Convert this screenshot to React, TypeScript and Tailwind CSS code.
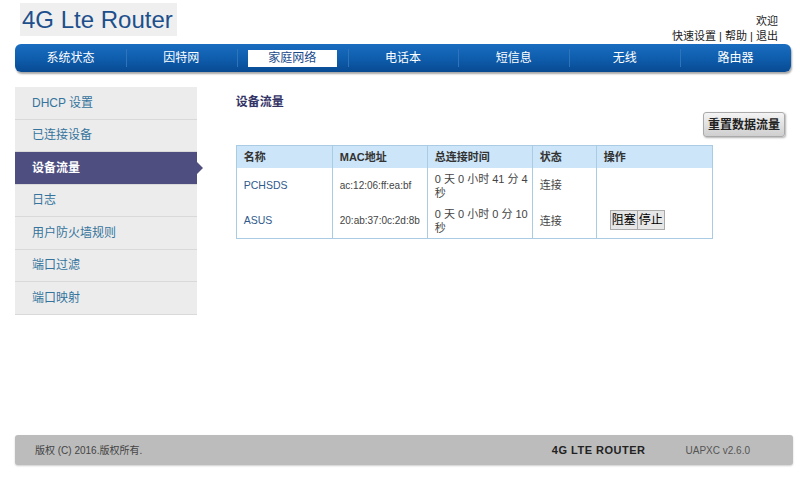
const navItems = ['系统状态', '因特网', '家庭网络', '电话本', '短信息', '无线', '路由器'];
const sideItems = ['DHCP 设置', '已连接设备', '设备流量', '日志', '用户防火墙规则', '端口过滤', '端口映射'];

type Device = { name: string; mac: string; time: [string, string]; state: string; actions: boolean };

const devices: Device[] = [
  { name: 'PCHSDS', mac: 'ac:12:06:ff:ea:bf', time: ['0 天 0 小时 41 分 4', '秒'], state: '连接', actions: false },
  { name: 'ASUS', mac: '20:ab:37:0c:2d:8b', time: ['0 天 0 小时 0 分 10', '秒'], state: '连接', actions: true },
];

const font = { fontFamily: '"Liberation Sans", Arial, "Noto Sans CJK SC", sans-serif' };

export default function App() {
  return (
    <div className="w-[800px] h-[485px] bg-white relative overflow-hidden" style={font}>
      {/* header */}
      <div className="h-[44px] flex justify-between px-[15px]">
        <div className="mt-[3px] ml-[5px] h-[33px] w-[157px] bg-[#efefef] flex items-center pl-[2px]">
          <span className="text-[24px] leading-none text-[#1d4f8c]">4G Lte Router</span>
        </div>
        <div className="flex flex-col items-end pr-[7px] pt-[14px] text-[11px] leading-[15px] text-[#222]">
          <span>欢迎</span>
          <span>快速设置 | 帮助 | 退出</span>
        </div>
      </div>

      {/* nav */}
      <div className="mx-[15px] mr-[9px] h-[28px] rounded-[6px] bg-gradient-to-b from-[#1a6dc0] via-[#0f5eae] to-[#084a92] shadow-[1px_2px_2px_rgba(0,0,0,0.35)] flex items-center">
        {navItems.map((item, i) => (
          <div key={item} className="flex-1 h-full flex items-center justify-center relative">
            {i > 0 && <span className="absolute left-0 top-[5px] bottom-[5px] w-px bg-[#2f74bb]" />}
            {item === '家庭网络' ? (
              <span className="bg-white text-[#1a4a8a] text-[12px] h-[17px] w-[89px] flex items-center justify-center">{item}</span>
            ) : (
              <span className="text-white text-[12px]">{item}</span>
            )}
          </div>
        ))}
      </div>

      {/* main */}
      <div className="h-[363px] flex px-[15px] pt-[15px]">
        <div className="w-[182px] self-start bg-[#ececec] relative">
          {sideItems.map((s) => {
            const active = s === '设备流量';
            return (
              <div
                key={s}
                className={
                  active
                    ? 'h-[32.5px] border-b border-[#d9d9d9] bg-[#4e4e80] text-white font-bold text-[12px] flex items-center pl-[17px] relative'
                    : 'h-[32.5px] border-b border-[#d9d9d9] text-[#35749c] text-[12px] flex items-center pl-[17px]'
                }
              >
                {s}
                {active && (
                  <span className="absolute right-[-6px] top-1/2 -translate-y-1/2 w-0 h-0 border-y-[6px] border-y-transparent border-l-[6px] border-l-[#4e4e80]" />
                )}
              </div>
            );
          })}
        </div>

        <div className="ml-[39px] w-[550px] flex flex-col">
          <div className="pt-[6px] text-[12px] font-bold text-[#333366]">设备流量</div>
          <div className="flex justify-end mt-[1px]">
            <button className="h-[25px] w-[82px] rounded-[3px] border border-[#aaa] bg-gradient-to-b from-[#f4f4f4] to-[#cfcfcf] text-[12px] font-bold text-[#222] shadow-[1px_1px_2px_rgba(0,0,0,0.3)]">
              重置数据流量
            </button>
          </div>
          <table className="mt-[8px] w-[476px] border-collapse border border-[#a9cbe4] text-[11px] table-fixed">
            <colgroup>
              <col className="w-[96px]" />
              <col className="w-[95px]" />
              <col className="w-[105px]" />
              <col className="w-[64px]" />
              <col className="w-[116px]" />
            </colgroup>
            <thead>
              <tr className="h-[22px] bg-[#cce5f8] text-left">
                {['名称', 'MAC地址', '总连接时间', '状态', '操作'].map((h) => (
                  <th key={h} className="border-r border-[#a9cbe4] pl-[7px] font-bold text-[#333]">{h}</th>
                ))}
              </tr>
            </thead>
            <tbody>
              {devices.map((d, i) => (
                <tr key={d.name} className={i === 0 ? 'h-[36px]' : 'h-[35px]'}>
                  <td className="border-r border-[#a9cbe4] pl-[7px] text-[10.5px] text-[#2f5a8c]">{d.name}</td>
                  <td className="border-r border-[#a9cbe4] pl-[7px] text-[10px] text-[#444]">{d.mac}</td>
                  <td className="border-r border-[#a9cbe4] pl-[7px] text-[#444] leading-[14px]">
                    {d.time[0]}
                    <br />
                    {d.time[1]}
                  </td>
                  <td className="border-r border-[#a9cbe4] pl-[7px] text-[#444]">{d.state}</td>
                  <td className="pl-[13px] align-bottom pb-[8px]">
                    {d.actions && (
                      <div className="flex">
                        <button className="h-[20px] px-[1px] border border-[#aaa] bg-[#e6e6e6] text-[12px] text-black">阻塞</button>
                        <button className="h-[20px] px-[1px] border border-l-0 border-[#aaa] bg-[#e6e6e6] text-[12px] text-black">停止</button>
                      </div>
                    )}
                  </td>
                </tr>
              ))}
            </tbody>
          </table>
        </div>
      </div>

      {/* footer */}
      <div className="mx-[15px] mr-[7px] h-[30px] rounded-[3px] bg-[#bcbcbc] shadow-[0_1px_2px_rgba(0,0,0,0.2)] flex items-center text-[10px] text-[#444]">
        <span className="pl-[20px]">版权 (C) 2016.版权所有.</span>
        <span className="ml-auto font-bold text-[11px] tracking-[0.5px] text-[#222]">4G LTE ROUTER</span>
        <span className="ml-[40px] mr-[43px] text-[10px] text-[#555]">UAPXC v2.6.0</span>
      </div>
    </div>
  );
}
